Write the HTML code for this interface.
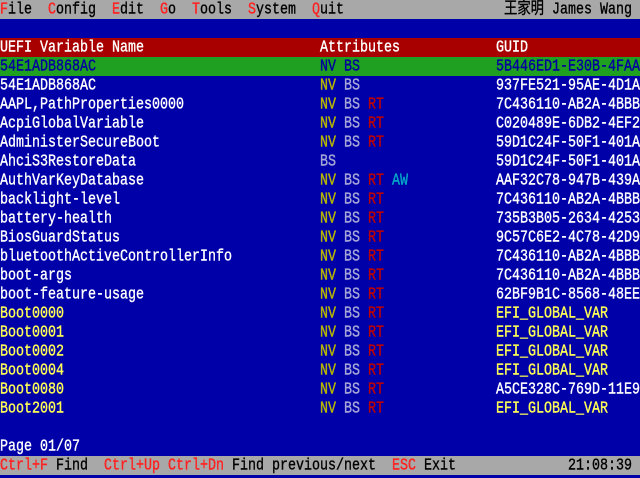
<!DOCTYPE html>
<html><head><meta charset="utf-8"><style>
*{margin:0;padding:0}
body{width:640px;height:475px;background:#0000a8;overflow:hidden;position:relative;font-family:"Liberation Mono","Noto Sans CJK SC",monospace;font-size:13.33px}
.r{position:absolute;left:0;width:640px;height:19px;line-height:19px;white-space:pre}
.r span{position:absolute;top:1px;display:inline-block;transform:scaleY(1.25);transform-origin:50% 55%;-webkit-text-stroke:0.3px currentColor}
.w{color:#fff}.y{color:#ffff55}.n{color:#b8b800}.b{color:#a8a8d8}.t{color:#c00000}.a{color:#00a8c8}.k{color:#000}.rd{color:#ff2020}.db{color:#0000a0}
b{font-weight:normal}
</style></head><body>
<div class="r" style="top:0;background:#a8a8a8"><span style="left:0" class="k"><b class="rd">F</b>ile  <b class="rd">C</b>onfig  <b class="rd">E</b>dit  <b class="rd">G</b>o  <b class="rd">T</b>ools  <b class="rd">S</b>ystem  <b class="rd">Q</b>uit</span><span style="left:504px" class="k">王家明 James Wang</span></div>
<div class="r" style="top:38px;background:#a80000"><span style="left:0" class="w">UEFI Variable Name</span><span style="left:320px" class="w">Attributes</span><span style="left:496px" class="w">GUID</span></div>
<div class="r" style="top:57px;background:#20a020"><span style="left:0" class="db">54E1ADB868AC</span><span style="left:320px" class="db">NV BS</span><span style="left:496px" class="db">5B446ED1-E30B-4FAA</span></div>
<div class="r" style="top:76px"><span style="left:0" class="w">54E1ADB868AC</span><span style="left:320px" class="n">NV</span><span style="left:344px" class="b">BS</span><span style="left:496px" class="w">937FE521-95AE-4D1A</span></div>
<div class="r" style="top:95px"><span style="left:0" class="w">AAPL,PathProperties0000</span><span style="left:320px" class="n">NV</span><span style="left:344px" class="b">BS</span><span style="left:368px" class="t">RT</span><span style="left:496px" class="w">7C436110-AB2A-4BBB</span></div>
<div class="r" style="top:114px"><span style="left:0" class="w">AcpiGlobalVariable</span><span style="left:320px" class="n">NV</span><span style="left:344px" class="b">BS</span><span style="left:368px" class="t">RT</span><span style="left:496px" class="w">C020489E-6DB2-4EF2</span></div>
<div class="r" style="top:133px"><span style="left:0" class="w">AdministerSecureBoot</span><span style="left:320px" class="n">NV</span><span style="left:344px" class="b">BS</span><span style="left:368px" class="t">RT</span><span style="left:496px" class="w">59D1C24F-50F1-401A</span></div>
<div class="r" style="top:152px"><span style="left:0" class="w">AhciS3RestoreData</span><span style="left:320px" class="b">BS</span><span style="left:496px" class="w">59D1C24F-50F1-401A</span></div>
<div class="r" style="top:171px"><span style="left:0" class="w">AuthVarKeyDatabase</span><span style="left:320px" class="n">NV</span><span style="left:344px" class="b">BS</span><span style="left:368px" class="t">RT</span><span style="left:392px" class="a">AW</span><span style="left:496px" class="w">AAF32C78-947B-439A</span></div>
<div class="r" style="top:190px"><span style="left:0" class="w">backlight-level</span><span style="left:320px" class="n">NV</span><span style="left:344px" class="b">BS</span><span style="left:368px" class="t">RT</span><span style="left:496px" class="w">7C436110-AB2A-4BBB</span></div>
<div class="r" style="top:209px"><span style="left:0" class="w">battery-health</span><span style="left:320px" class="n">NV</span><span style="left:344px" class="b">BS</span><span style="left:368px" class="t">RT</span><span style="left:496px" class="w">735B3B05-2634-4253</span></div>
<div class="r" style="top:228px"><span style="left:0" class="w">BiosGuardStatus</span><span style="left:320px" class="n">NV</span><span style="left:344px" class="b">BS</span><span style="left:368px" class="t">RT</span><span style="left:496px" class="w">9C57C6E2-4C78-42D9</span></div>
<div class="r" style="top:247px"><span style="left:0" class="w">bluetoothActiveControllerInfo</span><span style="left:320px" class="n">NV</span><span style="left:344px" class="b">BS</span><span style="left:368px" class="t">RT</span><span style="left:496px" class="w">7C436110-AB2A-4BBB</span></div>
<div class="r" style="top:266px"><span style="left:0" class="w">boot-args</span><span style="left:320px" class="n">NV</span><span style="left:344px" class="b">BS</span><span style="left:368px" class="t">RT</span><span style="left:496px" class="w">7C436110-AB2A-4BBB</span></div>
<div class="r" style="top:285px"><span style="left:0" class="w">boot-feature-usage</span><span style="left:320px" class="n">NV</span><span style="left:344px" class="b">BS</span><span style="left:368px" class="t">RT</span><span style="left:496px" class="w">62BF9B1C-8568-48EE</span></div>
<div class="r" style="top:304px"><span style="left:0" class="y">Boot0000</span><span style="left:320px" class="n">NV</span><span style="left:344px" class="b">BS</span><span style="left:368px" class="t">RT</span><span style="left:496px" class="y">EFI_GLOBAL_VAR</span></div>
<div class="r" style="top:323px"><span style="left:0" class="y">Boot0001</span><span style="left:320px" class="n">NV</span><span style="left:344px" class="b">BS</span><span style="left:368px" class="t">RT</span><span style="left:496px" class="y">EFI_GLOBAL_VAR</span></div>
<div class="r" style="top:342px"><span style="left:0" class="y">Boot0002</span><span style="left:320px" class="n">NV</span><span style="left:344px" class="b">BS</span><span style="left:368px" class="t">RT</span><span style="left:496px" class="y">EFI_GLOBAL_VAR</span></div>
<div class="r" style="top:361px"><span style="left:0" class="y">Boot0004</span><span style="left:320px" class="n">NV</span><span style="left:344px" class="b">BS</span><span style="left:368px" class="t">RT</span><span style="left:496px" class="y">EFI_GLOBAL_VAR</span></div>
<div class="r" style="top:380px"><span style="left:0" class="y">Boot0080</span><span style="left:320px" class="n">NV</span><span style="left:344px" class="b">BS</span><span style="left:368px" class="t">RT</span><span style="left:496px" class="w">A5CE328C-769D-11E9</span></div>
<div class="r" style="top:399px"><span style="left:0" class="y">Boot2001</span><span style="left:320px" class="n">NV</span><span style="left:344px" class="b">BS</span><span style="left:368px" class="t">RT</span><span style="left:496px" class="y">EFI_GLOBAL_VAR</span></div>
<div class="r" style="top:437px"><span style="left:0" class="w">Page 01/07</span></div>
<div class="r" style="top:456px;background:#a8a8a8"><span style="left:0" class="k"><b class="rd">Ctrl+F</b> Find  <b class="rd">Ctrl+Up Ctrl+Dn</b> Find previous/next  <b class="rd">ESC</b> Exit</span><span style="left:568px" class="k">21:08:39</span></div>
</body></html>
